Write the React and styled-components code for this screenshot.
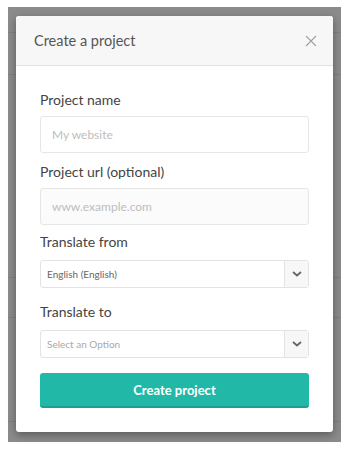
import React from 'react';
import styled, { createGlobalStyle } from 'styled-components';

const GlobalStyle = createGlobalStyle`
  * { box-sizing: border-box; }
  body {
    margin: 0;
    background: #fff;
    font-family: Lato, "Open Sans", sans-serif;
    color: #444;
  }
`;

const Page = styled.div`
  padding: 7px 7px 7px 8px;
`;

const Backdrop = styled.div`
  display: flex;
  width: 333px;
  height: 435px;
  padding: 9px 8px 10px 8px;
  background-color: #8b8b8b;
  background-image:
    linear-gradient(#808080, #808080),
    linear-gradient(#808080, #808080),
    linear-gradient(#808080, #808080),
    linear-gradient(#808080, #808080),
    linear-gradient(#808080, #808080);
  background-repeat: no-repeat;
  background-size: 100% 1px;
  background-position: 0 25px, 0 67px, 0 270px, 0 310px, 0 414px;
`;

const Modal = styled.div`
  flex: 1;
  display: flex;
  flex-direction: column;
  background: #fff;
  border-radius: 3px;
  box-shadow: 0 3px 8px rgba(0, 0, 0, 0.35);
  overflow: hidden;
`;

const Header = styled.div`
  display: flex;
  align-items: center;
  justify-content: space-between;
  height: 50px;
  padding: 0 16px 0 18px;
  background: #f7f7f7;
  border-bottom: 1px solid #e2e2e2;
`;

const Title = styled.h2`
  margin: 0;
  font-size: 14.5px;
  font-weight: 400;
  color: #555;
`;

const Close = styled.button`
  display: flex;
  padding: 0;
  border: 0;
  background: none;
  cursor: pointer;
`;

const Body = styled.form`
  display: flex;
  flex-direction: column;
  padding: 25px 24px 0 24px;
`;

const Label = styled.label`
  font-size: 14px;
  color: #444;
  line-height: 18px;
  margin-bottom: ${p => p.$gap}px;
`;

const Input = styled.input`
  height: 37px;
  padding: 0 11px;
  border: 1px solid #e6e6e6;
  border-radius: 3px;
  background: ${p => (p.$muted ? '#fbfbfb' : '#fff')};
  font-family: inherit;
  font-size: 12px;
  color: #444;
  margin-bottom: ${p => p.$gap}px;
  &::placeholder { color: #bdbdbd; }
`;

const Select = styled.div`
  display: flex;
  height: 28px;
  border: 1px solid #e3e3e3;
  border-radius: 3px;
  margin-bottom: ${p => p.$gap}px;
`;

const SelectValue = styled.div`
  flex: 1;
  display: flex;
  align-items: center;
  padding-left: 6px;
  font-size: 10px;
  color: ${p => (p.$placeholder ? '#a9a9a9' : '#666')};
`;

const SelectArrow = styled.div`
  display: flex;
  align-items: center;
  justify-content: center;
  width: 24px;
  border-left: 1px solid #e3e3e3;
  background: #f7f7f7;
`;

const Submit = styled.button`
  height: 35px;
  border: 0;
  border-bottom: 2px solid #1a9f91;
  border-radius: 3px;
  background: #22b8a8;
  color: #fff;
  font-family: inherit;
  font-size: 13px;
  font-weight: 700;
  cursor: pointer;
`;

const Chevron = () => (
  <svg width="10" height="6" viewBox="0 0 10 6">
    <path d="M1 1l4 3.5L9 1" fill="none" stroke="#666" strokeWidth="1.8" />
  </svg>
);

const XIcon = () => (
  <svg width="12" height="12" viewBox="0 0 12 12">
    <path d="M1 1l10 10M11 1L1 11" stroke="#a0a0a0" strokeWidth="1.1" />
  </svg>
);

const App = () => (
  <Page>
    <GlobalStyle />
    <Backdrop>
      <Modal>
        <Header>
          <Title>Create a project</Title>
          <Close type="button"><XIcon /></Close>
        </Header>
        <Body onSubmit={e => e.preventDefault()}>
          <Label $gap={7}>Project name</Label>
          <Input $gap={10} placeholder="My website" />
          <Label $gap={7}>Project url (optional)</Label>
          <Input $gap={8} $muted placeholder="www.example.com" />
          <Label $gap={9}>Translate from</Label>
          <Select $gap={15}>
            <SelectValue>English (English)</SelectValue>
            <SelectArrow><Chevron /></SelectArrow>
          </Select>
          <Label $gap={9}>Translate to</Label>
          <Select $gap={15}>
            <SelectValue $placeholder>Select an Option</SelectValue>
            <SelectArrow><Chevron /></SelectArrow>
          </Select>
          <Submit type="submit">Create project</Submit>
        </Body>
      </Modal>
    </Backdrop>
  </Page>
);

export default App;
